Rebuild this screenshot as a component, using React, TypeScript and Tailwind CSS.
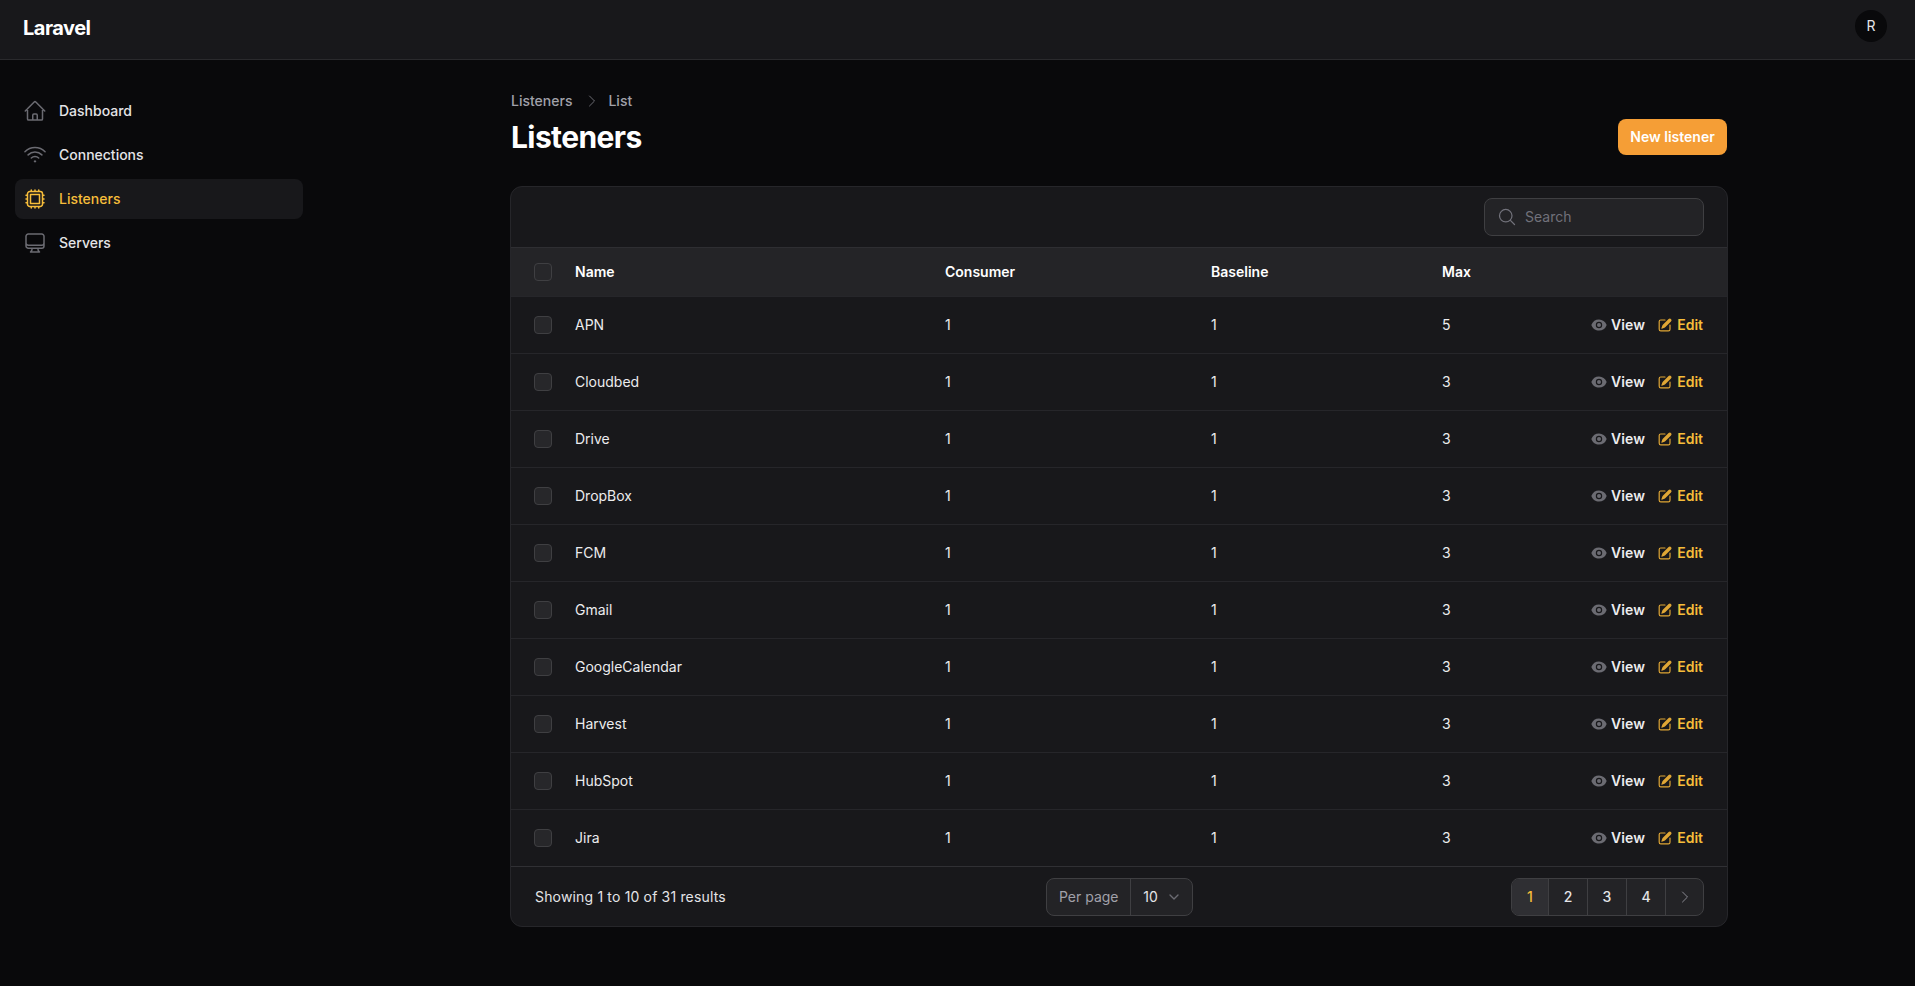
import { ChevronDownIcon } from "lucide-react";
import {
  HiOutlineHome,
  HiOutlineWifi,
  HiOutlineCpuChip,
  HiOutlineComputerDesktop,
  HiOutlineMagnifyingGlass,
  HiOutlineChevronRight,
  HiMiniEye,
  HiMiniPencilSquare,
} from "react-icons/hi2";

const listeners = [
  { name: "APN", max: 5 },
  { name: "Cloudbed", max: 3 },
  { name: "Drive", max: 3 },
  { name: "DropBox", max: 3 },
  { name: "FCM", max: 3 },
  { name: "Gmail", max: 3 },
  { name: "GoogleCalendar", max: 3 },
  { name: "Harvest", max: 3 },
  { name: "HubSpot", max: 3 },
  { name: "Jira", max: 3 },
];

const navItems = [
  { label: "Dashboard", icon: HiOutlineHome },
  { label: "Connections", icon: HiOutlineWifi },
  { label: "Listeners", icon: HiOutlineCpuChip, active: true },
  { label: "Servers", icon: HiOutlineComputerDesktop },
];

const Checkbox = () => (
  <div className="h-[18px] w-[18px] rounded-[4px] border border-[#3f3f42] bg-[#27272a]" />
);

const Row: React.FC<{ name: string; max: number }> = ({ name, max }) => (
  <div className="flex h-[57px] items-center border-t border-[#26262a] text-sm text-[#ececee]">
    <div className="w-[64px] shrink-0 pl-[23px]">
      <Checkbox />
    </div>
    <div className="w-[370px] shrink-0">{name}</div>
    <div className="w-[266px] shrink-0">1</div>
    <div className="w-[231px] shrink-0">1</div>
    <div className="w-[100px] shrink-0">{max}</div>
    <div className="flex flex-1 items-center justify-end gap-3 pr-6 font-semibold">
      <span className="flex items-center gap-1">
        <HiMiniEye className="h-4 w-4 text-[#6b6b72]" />
        <span className="tracking-[0.01em]">View</span>
      </span>
      <span className="flex items-center gap-1 text-[#f6bd3a]">
        <HiMiniPencilSquare className="h-4 w-4 text-[#dfa635]" />
        <span>Edit</span>
      </span>
    </div>
  </div>
);

export default function App() {
  return (
    <div className="min-h-[986px] bg-[#09090b] font-['Inter',sans-serif] text-white">
      <header className="flex h-[60px] items-center justify-between border-b border-[#2a2a2d] bg-[#18181b] pl-[23px] pr-[28px]">
        <div className="-mt-[4px] text-xl font-bold tracking-tight">Laravel</div>
        <div className="-mt-[7px] flex h-8 w-8 items-center justify-center rounded-full bg-[#09090b] text-sm text-[#e4e4e7]">
          R
        </div>
      </header>

      <div className="flex">
        <aside className="w-[318px] shrink-0 px-[15px] pt-[31px]">
          <nav className="flex flex-col gap-1">
            {navItems.map((item) => {
              const Icon = item.icon;
              return (
                <div
                  key={item.label}
                  className={`flex h-10 items-center gap-3 rounded-lg pl-[8px] text-sm font-medium ${
                    item.active ? "bg-[#18181b] text-[#f6bd3a]" : "text-[#e4e4e7]"
                  }`}
                >
                  <Icon className={`h-6 w-6 ${item.active ? "text-[#f6bd3a]" : "text-[#6b6b72]"}`} />
                  <span>{item.label}</span>
                </div>
              );
            })}
          </nav>
        </aside>

        <main className="ml-[192px] w-[1218px] pt-[31px]">
          <div className="flex items-end justify-between pr-[1px]">
            <div>
              <div className="flex items-center pl-[1px] text-sm font-medium text-[#a1a1aa]">
                <span>Listeners</span>
                <HiOutlineChevronRight className="ml-3 mr-[8px] h-4 w-4 text-[#6b6b72]" />
                <span>List</span>
              </div>
              <h1 className="mt-2 pl-[1px] text-3xl leading-9 font-bold tracking-[-0.02em]">Listeners</h1>
            </div>
            <button className="flex h-9 w-[109px] items-center justify-center rounded-lg bg-[#f59e36] text-sm font-semibold text-white">
              New listener
            </button>
          </div>

          <section className="mt-[31px] overflow-hidden rounded-xl border border-[#26262a] bg-[#18181b]">
            <div className="flex h-[60px] items-center justify-end pr-[23px]">
              <div className="flex h-[38px] w-[220px] items-center gap-2 rounded-lg border border-[#3f3f42] bg-[#232326] pl-3 text-sm text-[#71717a]">
                <HiOutlineMagnifyingGlass className="h-5 w-5 text-[#71717a]" />
                <span>Search</span>
              </div>
            </div>

            <div className="flex h-[50px] items-center border-y border-[#2e2e32] bg-[#242427] text-sm font-semibold text-white">
              <div className="w-[64px] shrink-0 pl-[23px]">
                <Checkbox />
              </div>
              <div className="w-[370px] shrink-0">Name</div>
              <div className="w-[266px] shrink-0">Consumer</div>
              <div className="w-[231px] shrink-0">Baseline</div>
              <div>Max</div>
            </div>

            <div className="-mt-[1px]">
              {listeners.map((l) => (
                <Row key={l.name} name={l.name} max={l.max} />
              ))}
            </div>

            <div className="flex h-[60px] items-center justify-between border-t border-[#303034] pl-6 pr-[23px] text-sm">
              <div className="w-[320px] tracking-[0.012em] text-[#e4e4e7]">Showing 1 to 10 of 31 results</div>

              <div className="flex h-[38px] items-center rounded-lg border border-[#3f3f42] bg-[#232326]">
                <div className="flex h-full w-[84px] items-center justify-center border-r border-[#3f3f42] text-[#a1a1aa]">Per page</div>
                <div className="flex items-center gap-2 pl-3 pr-[10px] text-[#e4e4e7]">
                  <span>10</span>
                  <ChevronDownIcon className="h-4 w-4 text-[#6b6b72]" />
                </div>
              </div>

              <div className="flex h-[38px] w-[320px] justify-end">
                <div className="flex overflow-hidden rounded-lg border border-[#3f3f42] bg-[#232326] font-medium text-[#e4e4e7]">
                  <div className="flex w-[36px] items-center justify-center bg-[#2f2f33] text-[#f6bd3a]">1</div>
                  <div className="flex w-[39px] items-center justify-center border-l border-[#3f3f42]">2</div>
                  <div className="flex w-[39px] items-center justify-center border-l border-[#3f3f42]">3</div>
                  <div className="flex w-[39px] items-center justify-center border-l border-[#3f3f42]">4</div>
                  <div className="flex w-[38px] items-center justify-center border-l border-[#3f3f42]">
                    <HiOutlineChevronRight className="h-4 w-4 text-[#8a8a92]" />
                  </div>
                </div>
              </div>
            </div>
          </section>
        </main>
      </div>
    </div>
  );
}
